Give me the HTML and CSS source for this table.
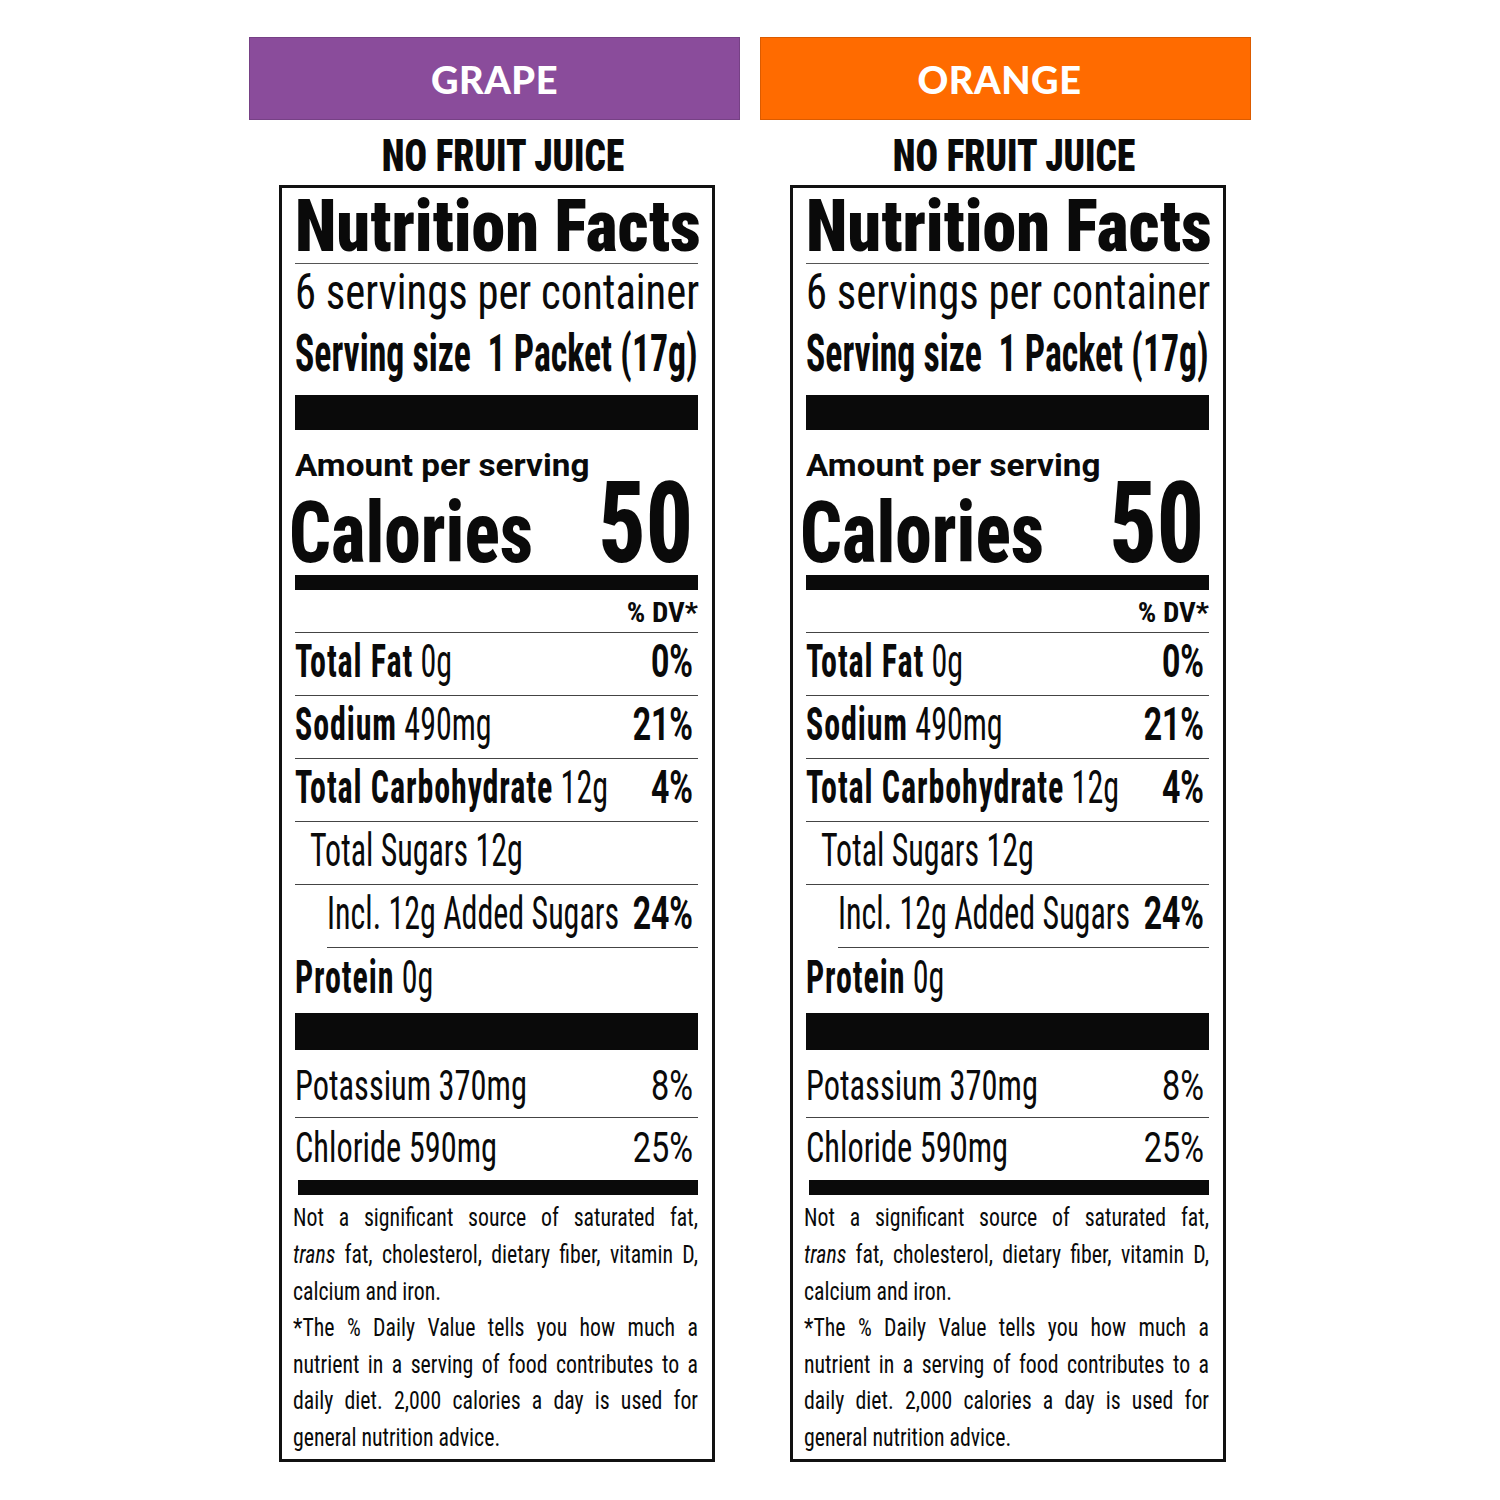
FILE: index.html
```html
<!DOCTYPE html>
<html lang="en">
<head>
<meta charset="utf-8">
<title>Nutrition Facts</title>
<link rel="stylesheet" href="styles.css">
</head>
<body>
<div class="page">
  <section class="col">
    <div class="flavor grape">GRAPE</div>
    <div class="nojuice"><span class="t">NO FRUIT JUICE</span></div>
    <div class="panel">
      <div class="nf"><span class="t">Nutrition Facts</span></div>
      <div class="servings"><span class="t">6 servings per container</span></div>
      <div class="ssize"><span class="t">Serving size&nbsp; 1 Packet (17g)</span></div>
      <div class="bar bar-xl"></div>
      <div class="amount"><span class="t">Amount per serving</span></div>
      <div class="cal"><span class="t cal-l">Calories</span><span class="t cal-v">50</span></div>
      <div class="bar bar-m"></div>
      <div class="dv"><span class="t">% DV*</span></div>
      <div class="row"><span class="t"><b>Total Fat</b> 0g</span><span class="t pct"><b>0%</b></span></div>
      <div class="row"><span class="t"><b>Sodium</b> 490mg</span><span class="t pct"><b>21%</b></span></div>
      <div class="row"><span class="t"><b>Total Carbohydrate</b> 12g</span><span class="t pct"><b>4%</b></span></div>
      <div class="row sub1"><span class="t">Total Sugars 12g</span></div>
      <div class="row sub2"><span class="t">Incl. 12g Added Sugars</span><span class="t pct"><b>24%</b></span></div>
      <div class="row last"><span class="t"><b>Protein</b> 0g</span></div>
      <div class="bar bar-l"></div>
      <div class="row min k"><span class="t">Potassium 370mg</span><span class="t pct">8%</span></div>
      <div class="row min cl"><span class="t">Chloride 590mg</span><span class="t pct">25%</span></div>
      <div class="bar bar-b"></div>
      <div class="foot">
        <div class="foot-in">
          <div class="fl">Not a significant source of saturated fat,</div>
          <div class="fl"><i>trans</i> fat, cholesterol, dietary fiber, vitamin D,</div>
          <div class="fl end">calcium and iron.</div>
          <div class="fl">*The % Daily Value tells you how much a</div>
          <div class="fl">nutrient in a serving of food contributes to a</div>
          <div class="fl">daily diet. 2,000 calories a day is used for</div>
          <div class="fl end">general nutrition advice.</div>
        </div>
      </div>
    </div>
  </section>
  <section class="col">
    <div class="flavor orange">ORANGE</div>
    <div class="nojuice"><span class="t">NO FRUIT JUICE</span></div>
    <div class="panel">
      <div class="nf"><span class="t">Nutrition Facts</span></div>
      <div class="servings"><span class="t">6 servings per container</span></div>
      <div class="ssize"><span class="t">Serving size&nbsp; 1 Packet (17g)</span></div>
      <div class="bar bar-xl"></div>
      <div class="amount"><span class="t">Amount per serving</span></div>
      <div class="cal"><span class="t cal-l">Calories</span><span class="t cal-v">50</span></div>
      <div class="bar bar-m"></div>
      <div class="dv"><span class="t">% DV*</span></div>
      <div class="row"><span class="t"><b>Total Fat</b> 0g</span><span class="t pct"><b>0%</b></span></div>
      <div class="row"><span class="t"><b>Sodium</b> 490mg</span><span class="t pct"><b>21%</b></span></div>
      <div class="row"><span class="t"><b>Total Carbohydrate</b> 12g</span><span class="t pct"><b>4%</b></span></div>
      <div class="row sub1"><span class="t">Total Sugars 12g</span></div>
      <div class="row sub2"><span class="t">Incl. 12g Added Sugars</span><span class="t pct"><b>24%</b></span></div>
      <div class="row last"><span class="t"><b>Protein</b> 0g</span></div>
      <div class="bar bar-l"></div>
      <div class="row min k"><span class="t">Potassium 370mg</span><span class="t pct">8%</span></div>
      <div class="row min cl"><span class="t">Chloride 590mg</span><span class="t pct">25%</span></div>
      <div class="bar bar-b"></div>
      <div class="foot">
        <div class="foot-in">
          <div class="fl">Not a significant source of saturated fat,</div>
          <div class="fl"><i>trans</i> fat, cholesterol, dietary fiber, vitamin D,</div>
          <div class="fl end">calcium and iron.</div>
          <div class="fl">*The % Daily Value tells you how much a</div>
          <div class="fl">nutrient in a serving of food contributes to a</div>
          <div class="fl">daily diet. 2,000 calories a day is used for</div>
          <div class="fl end">general nutrition advice.</div>
        </div>
      </div>
    </div>
  </section>
</div>
</body>
</html>
```
FILE: styles.css
```css
* { box-sizing: border-box; }
body {
  margin: 0;
  background: #fff;
  color: #0a0a0a;
  font-family: Roboto, "Liberation Sans", sans-serif;
}
.page {
  display: flex;
  gap: 20px;
  padding: 37px 0 0 249px;
}
.col { width: 491px; }

/* flavor header */
.flavor {
  height: 83px;
  display: flex;
  align-items: center;
  justify-content: center;
  color: #fff;
  font-family: Lato, "Open Sans", sans-serif;
  font-weight: 900;
  font-size: 38px;
  letter-spacing: .5px;
  border: 1px solid rgba(0,0,0,.14);
}
.grape { background: #8a4c9b; }
.orange { background: #ff6b00; padding-right: 12px; }

/* generic stretched text */
.t {
  display: inline-block;
  line-height: 1;
  white-space: nowrap;
  transform-origin: 0 .842em;
  transform: scaleY(var(--sy, 1));
}

.nojuice {
  height: 65px;
  padding: 19.5px 0 0 17px;
  text-align: center;
  line-height: 1;
}
.nojuice .t {
  font-size: 37.3px;
  font-weight: 900;
  font-stretch: condensed;
  --sy: 1.21;
}

/* panel */
.panel {
  margin-left: 30px;
  width: 436px;
  border: 3px solid #111;
  padding: 0 14px 0 13px;
}
.nf {
  height: 75.5px;
  padding-top: 11.9px;
  border-bottom: 1.5px solid #555;
}
.nf .t {
  font-size: 68px;
  line-height: .85;
  transform-origin: 0 .767em;
  font-weight: 900;
  font-stretch: condensed;
  --sy: 1.07;
}
.servings {
  height: 50px;
  padding-top: 9.6px;
}
.servings .t {
  font-size: 42.6px;
  font-weight: 400;
  font-stretch: condensed;
  --sy: 1.19;
}
.ssize {
  height: 81.5px;
  padding-top: 28.4px;
}
.ssize .t {
  font-size: 35.8px;
  font-weight: 700;
  font-stretch: condensed;
  --sy: 1.43;
}
.bar { background: #0a0a0a; }
.bar-xl { height: 35px; }
.bar-m { height: 15px; }
.bar-l { height: 37px; }
.bar-b { height: 15px; margin-left: 3px; }

.amount {
  height: 50px;
  padding-top: 17.7px;
}
.amount .t {
  font-size: 33.3px;
  font-weight: 700;
  --sy: .92;
}
.cal {
  height: 95px;
  padding: 3.7px 5px 0 0;
  display: flex;
  justify-content: space-between;
  align-items: baseline;
}
.cal-l {
  margin-left: -6px;
  font-size: 73.5px;
  font-weight: 800;
  font-stretch: condensed;
  --sy: 1.16;
}
.cal-v {
  font-size: 93px;
  font-weight: 800;
  font-stretch: condensed;
  --sy: 1.21;
}
.dv {
  height: 42.5px;
  padding-top: 7.6px;
  text-align: right;
  border-bottom: 1.5px solid #444;
}
.dv .t {
  font-size: 29px;
  font-weight: 700;
  font-stretch: condensed;
  --sy: .97;
}

.row {
  height: 63.2px;
  padding: 17.1px 5px 0 0;
  display: flex;
  justify-content: space-between;
  align-items: baseline;
  border-bottom: 1.5px solid #444;
}
.row .t {
  font-size: 32px;
  font-weight: 400;
  font-stretch: condensed;
  --sy: 1.45;
}
.row b { font-weight: 700; letter-spacing: .9px; }
.row .pct, .row .pct b { font-stretch: normal; letter-spacing: 0; }
.row.sub1 { padding-left: 15px; }
.row.sub2 { margin-left: 32px; }
.row.last { height: 64.5px; border-bottom: 0; }
.row.min .t {
  font-size: 32.4px;
  --sy: 1.3;
}
.row.k { height: 68px; padding-top: 22.7px; }
.row.cl { height: 62px; padding-top: 16.7px; border-bottom: 0; }

.foot {
  height: 264px;
  padding-top: 5.3px;
}
.foot-in {
  transform: scaleY(1.15);
  transform-origin: 0 0;
  margin-left: -2px;
}
.fl {
  font-size: 21.8px;
  line-height: 31.8px;
  font-stretch: condensed;
  white-space: nowrap;
  text-align: justify;
  text-align-last: justify;
}
.fl.end { text-align-last: left; }
```
